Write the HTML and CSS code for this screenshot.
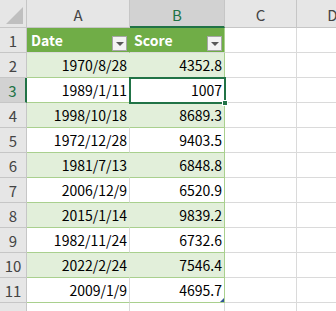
FILE: index.html
```html
<!DOCTYPE html>
<html lang="ja">
<head>
  <meta charset="UTF-8" />
  <title>Sheet1</title>
  <link rel="stylesheet" href="styles.css">
</head>
<body>
  <div class="sheet">
    <div class="corner"><span class="corner-tri"></span></div>
    <div class="col-head">A</div>
    <div class="col-head active">B</div>
    <div class="col-head">C</div>
    <div class="col-head">D</div>

    <div class="row-head">1</div>
    <div class="cell th">Date<span class="filter"></span></div>
    <div class="cell th">Score<span class="filter"></span></div>
    <div class="cell"></div>
    <div class="cell"></div>

    <div class="row-head">2</div>
    <div class="cell band">1970/8/28</div>
    <div class="cell band">4352.8</div>
    <div class="cell"></div>
    <div class="cell"></div>

    <div class="row-head active">3</div>
    <div class="cell plain">1989/1/11</div>
    <div class="cell plain selected">1007<span class="handle"></span></div>
    <div class="cell"></div>
    <div class="cell"></div>

    <div class="row-head">4</div>
    <div class="cell band">1998/10/18</div>
    <div class="cell band">8689.3</div>
    <div class="cell"></div>
    <div class="cell"></div>

    <div class="row-head">5</div>
    <div class="cell plain">1972/12/28</div>
    <div class="cell plain">9403.5</div>
    <div class="cell"></div>
    <div class="cell"></div>

    <div class="row-head">6</div>
    <div class="cell band">1981/7/13</div>
    <div class="cell band">6848.8</div>
    <div class="cell"></div>
    <div class="cell"></div>

    <div class="row-head">7</div>
    <div class="cell plain">2006/12/9</div>
    <div class="cell plain">6520.9</div>
    <div class="cell"></div>
    <div class="cell"></div>

    <div class="row-head">8</div>
    <div class="cell band">2015/1/14</div>
    <div class="cell band">9839.2</div>
    <div class="cell"></div>
    <div class="cell"></div>

    <div class="row-head">9</div>
    <div class="cell plain">1982/11/24</div>
    <div class="cell plain">6732.6</div>
    <div class="cell"></div>
    <div class="cell"></div>

    <div class="row-head">10</div>
    <div class="cell band">2022/2/24</div>
    <div class="cell band">7546.4</div>
    <div class="cell"></div>
    <div class="cell"></div>

    <div class="row-head">11</div>
    <div class="cell plain">2009/1/9</div>
    <div class="cell plain last">4695.7<span class="resize"></span></div>
    <div class="cell"></div>
    <div class="cell"></div>

    <div class="row-head"></div>
    <div class="cell"></div>
    <div class="cell"></div>
    <div class="cell"></div>
    <div class="cell"></div>
  </div>
</body>
</html>
```

FILE: styles.css
```css
* {
  box-sizing: border-box;
  margin: 0;
  padding: 0;
}

body {
  background: #fff;
  font-family: "Noto Sans CJK JP", "Noto Sans", sans-serif;
  font-size: 14px;
  color: #000;
  overflow: hidden;
}

/* Grid of cells */
.sheet {
  display: grid;
  width: 336px;
  height: 311px;
  overflow: hidden;
  grid-template-columns: 27px 103px 95px 72px 72px;
  grid-template-rows: 28px repeat(12, 25px);
}

.corner,
.col-head,
.row-head {
  background: #e6e6e6;
  color: #444;
  border-right: 1px solid #c6c6c6;
  border-bottom: 1px solid #c6c6c6;
  display: flex;
  align-items: center;
  justify-content: center;
  font-size: 15px;
}

.corner {
  position: relative;
}

.corner-tri {
  position: absolute;
  right: 3px;
  bottom: 3px;
  width: 0;
  height: 0;
  border-left: 17px solid transparent;
  border-bottom: 17px solid #bfbfbf;
}

.col-head {
  padding-top: 2px;
}

.col-head.active {
  background: #d2d2d2;
  color: #217346;
  border-bottom: 2px solid #217346;
}

.row-head.active {
  background: #d2d2d2;
  color: #217346;
  border-right: 2px solid #217346;
}

.cell {
  border-right: 1px solid #dadada;
  border-bottom: 1px solid #dadada;
  display: flex;
  align-items: center;
  justify-content: flex-end;
  padding-right: 2px;
  position: relative;
  white-space: nowrap;
}

/* Table body */
.band {
  background: #e2efda;
  border-bottom-color: #a9d08e;
  border-right-color: #e2efda;
}

.plain {
  border-bottom-color: #a9d08e;
}

.band + .band,
.plain + .plain {
  border-right-color: #a9d08e;
}

.th {
  background: #70ad47;
  color: #fff;
  font-weight: bold;
  justify-content: flex-start;
  padding-left: 4px;
  border-right-color: #70ad47;
}

.th + .th {
  border-right-color: #a9d08e;
}

.filter {
  position: absolute;
  right: 2px;
  bottom: 1px;
  width: 15px;
  height: 15px;
  background: #f3f3f3;
  border: 1px solid #a6a6a6;
}

.filter::after {
  content: "";
  position: absolute;
  left: 3px;
  top: 5px;
  border-left: 4px solid transparent;
  border-right: 4px solid transparent;
  border-top: 4px solid #595959;
}

/* Active cell */
.selected {
  outline: 2px solid #217346;
  outline-offset: -1px;
  z-index: 2;
}

.handle {
  position: absolute;
  right: -4px;
  bottom: -4px;
  width: 6px;
  height: 6px;
  background: #217346;
  border: 1px solid #fff;
}

.resize {
  position: absolute;
  right: 0;
  bottom: 0;
  width: 0;
  height: 0;
  border-left: 4px solid transparent;
  border-bottom: 4px solid #2f5597;
}
```
